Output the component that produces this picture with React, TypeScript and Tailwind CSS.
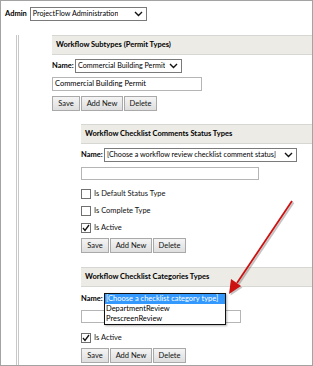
import React from "react";

const font = { fontFamily: 'Lato, "Noto Sans", sans-serif' };

function Chevron() {
  return (
    <svg width="9" height="6" viewBox="0 0 9 6" className="shrink-0">
      <path d="M1 1 L4.5 4.5 L8 1" fill="none" stroke="#111" strokeWidth="1.4" />
    </svg>
  );
}

function Select({ value, className }: { value: string; className: string }) {
  return (
    <div
      className={`flex h-[14px] items-center justify-between whitespace-nowrap border border-[#7a7a7a] bg-white pl-[2px] pr-[3px] text-[7.2px] leading-none text-black ${className}`}
    >
      <span className="overflow-hidden">{value}</span>
      <Chevron />
    </div>
  );
}

function Button({ label, w }: { label: string; w: string }) {
  return (
    <div
      className={`flex h-[15px] items-center justify-center whitespace-nowrap border border-[#a9a9a9] bg-gradient-to-b from-[#f4f4f4] to-[#dedede] text-[7.5px] leading-none text-[#111] ${w}`}
    >
      {label}
    </div>
  );
}

function Buttons() {
  return (
    <div className="flex gap-[1px]">
      <Button label="Save" w="w-[28px]" />
      <Button label="Add New" w="w-[42px]" />
      <Button label="Delete" w="w-[33px]" />
    </div>
  );
}

function Header({ title }: { title: string }) {
  return (
    <div className="flex h-[20px] items-center whitespace-nowrap border-y border-[#d6d6d2] bg-[#ecebe5] pl-[4px] text-[7.5px] font-bold leading-none text-black">
      {title}
    </div>
  );
}

function Check({ label, checked }: { label: string; checked?: boolean }) {
  return (
    <div className="flex items-center gap-[3px] whitespace-nowrap text-[7.5px] leading-none text-[#111]">
      <div className="flex h-[10px] w-[10px] items-center justify-center border border-[#707070] bg-white">
        {checked && (
          <svg width="8" height="8" viewBox="0 0 8 8">
            <path d="M1 4 L3 6.5 L7 1" fill="none" stroke="#111" strokeWidth="1.3" />
          </svg>
        )}
      </div>
      {label}
    </div>
  );
}

function Name() {
  return <span className="w-[23px] whitespace-nowrap text-[7.5px] font-bold text-black">Name:</span>;
}

export default function App() {
  return (
    <div
      className="relative h-[366px] w-[313px] overflow-hidden border border-[#a3a3a3] bg-white"
      style={font}
    >
      <div className="flex items-center gap-[3px] pl-[4px] pt-[6px]">
        <span className="text-[7.5px] font-bold text-black">Admin</span>
        <Select value="ProjectFlow Administration" className="w-[117px]" />
      </div>

      <div className="mt-[14px] flex">
        <div className="ml-[15px] h-[340px] w-[3px] border-x border-[#c8c8c8]" />
        <div className="ml-[33px] flex-1">
          <Header title="Workflow Subtypes (Permit Types)" />
          <div className="mt-[4px] flex items-center">
            <Name />
            <Select value="Commercial Building Permit" className="w-[107px]" />
          </div>
          <div className="mt-[4px] flex h-[14px] w-[150px] items-center whitespace-nowrap border border-[#b5b5b5] bg-white pl-[2px] text-[7.5px] leading-none text-black">
            Commercial Building Permit
          </div>
          <div className="mt-[5px]">
            <Buttons />
          </div>

          <div className="ml-[29px] mt-[13px]">
            <Header title="Workflow Checklist Comments Status Types" />
            <div className="mt-[4px] flex items-center">
              <Name />
              <Select
                value="[Choose a workflow review checklist comment status]"
                className="w-[193px]"
              />
            </div>
            <div className="mt-[5px] h-[13px] w-[178px] border border-[#b5b5b5] bg-white" />
            <div className="mt-[9px] flex flex-col gap-[7px]">
              <Check label="Is Default Status Type" />
              <Check label="Is Complete Type" />
              <Check label="Is Active" checked />
            </div>
            <div className="mt-[5px]">
              <Buttons />
            </div>

            <div className="mt-[14px]">
              <Header title="Workflow Checklist Categories Types" />
              <div className="relative">
                <div className="mt-[5px] flex items-center">
                  <Name />
                  <div className="h-[14px] w-[122px]" />
                </div>
                <div className="mt-[4px] h-[13px] w-[160px] border border-[#b5b5b5] bg-white" />
                <div className="absolute left-[23px] top-[1px] w-[122px] whitespace-nowrap border border-[#111] bg-white text-[7.5px] leading-[10px] text-black shadow-[1px_1px_2px_rgba(0,0,0,0.3)]">
                  <div className="bg-[#3399ff] pl-[1px] text-white">
                    [Choose a checklist category type]
                  </div>
                  <div className="pl-[1px]">DepartmentReview</div>
                  <div className="pl-[1px]">PrescreenReview</div>
                </div>
              </div>
              <div className="mt-[10px]">
                <Check label="Is Active" checked />
              </div>
              <div className="mt-[5px]">
                <Buttons />
              </div>
            </div>
          </div>
        </div>
      </div>

      <svg
        className="pointer-events-none absolute left-0 top-0"
        width="313"
        height="366"
        viewBox="0 0 313 366"
      >
        <g opacity="0.35" transform="translate(1.5,1.5)">
          <line x1="291" y1="200" x2="236" y2="282" stroke="#555" strokeWidth="2" />
          <path d="M228 293 L230 278 L240 285 Z" fill="#555" />
        </g>
        <line x1="291" y1="200" x2="236" y2="282" stroke="#cc1111" strokeWidth="1.8" />
        <path d="M228 293 L230 278 L240 285 Z" fill="#cc1111" />
      </svg>
    </div>
  );
}
